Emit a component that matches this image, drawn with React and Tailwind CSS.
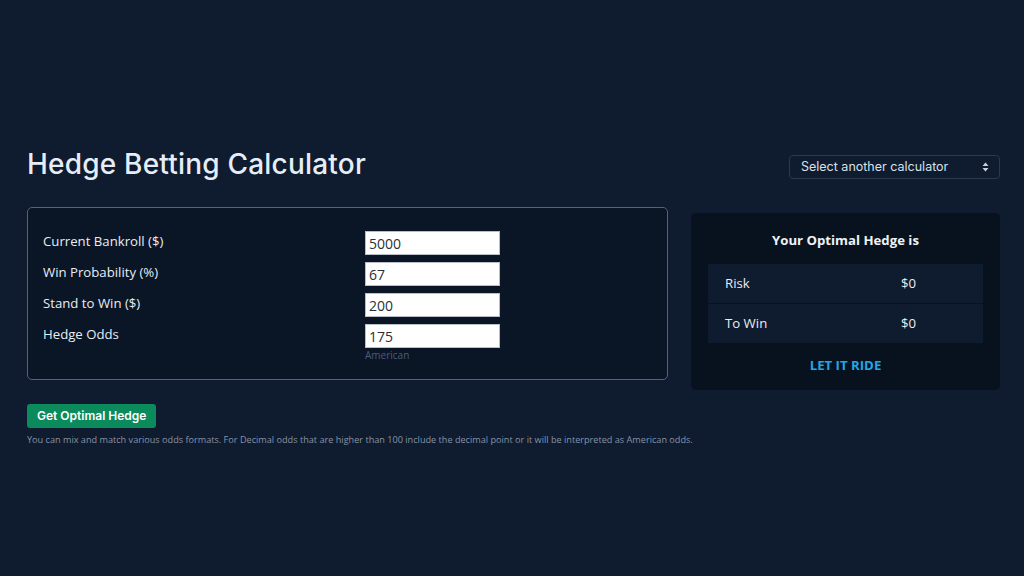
import { useState } from 'react';

const fields = [
    { key: 'bankroll', label: 'Current Bankroll ($)', value: '5000' },
    { key: 'prob', label: 'Win Probability (%)', value: '67' },
    { key: 'stand', label: 'Stand to Win ($)', value: '200' },
    { key: 'odds', label: 'Hedge Odds', value: '175', hint: 'American' },
];

const heading = { fontFamily: 'Inter, "Open Sans", sans-serif' };
const body = { fontFamily: '"Open Sans", "Liberation Sans", sans-serif' };

const App = () => {
    const [values, setValues] = useState(
        Object.fromEntries(fields.map((f) => [f.key, f.value]))
    );

    return (
        <div className="min-h-screen w-full bg-[#0f1b2e] text-white" style={body}>
            <div className="px-[27px] pt-[146px] pr-[24px]">
                <div className="flex items-start justify-between">
                    <h1 className="text-[28px] leading-[36px] font-medium text-[#e6edf6] tracking-[0.2px]" style={heading}>
                        Hedge Betting Calculator
                    </h1>
                    <div className="mt-[9px] flex h-[24px] w-[211px] items-center justify-between rounded-[4px] border border-[#2a3850] bg-[#0f1b2e] pl-[11px] pr-[10px]">
                        <span className="text-[12.5px] text-[#d8e0ea]" style={heading}>Select another calculator</span>
                        <svg width="7" height="10" viewBox="0 0 7 10" fill="#c7d0db">
                            <path d="M3.5 0.5L6.5 4H0.5z" />
                            <path d="M3.5 9.5L6.5 6H0.5z" />
                        </svg>
                    </div>
                </div>

                <div className="mt-[25px] flex items-start gap-[23px]">
                    <div className="w-[641px] shrink-0">
                        <div className="h-[173px] w-[641px] rounded-[5px] border border-[#56627a] bg-[#0a1526] pl-[15px] pt-[23px]">
                            <div className="flex flex-col gap-[7px]">
                                {fields.map((f) => (
                                    <div key={f.key} className="flex items-start">
                                        <label className="w-[322px] text-[13.2px] leading-[20px] text-[#e8edf4]">
                                            {f.label}
                                        </label>
                                        <div className="flex flex-col">
                                            <input
                                                value={values[f.key]}
                                                onChange={(e) => setValues({ ...values, [f.key]: e.target.value })}
                                                className="h-[24px] w-[135px] border border-[#b8bfc8] bg-white px-[3px] text-[14px] text-[#2b2f36] outline-none"
                                            />
                                            {f.hint && (
                                                <span className="mt-[1px] text-[10px] leading-[13px] text-[#4d5d75]">{f.hint}</span>
                                            )}
                                        </div>
                                    </div>
                                ))}
                            </div>
                        </div>

                        <button
                            className="mt-[24px] h-[24px] rounded-[3px] bg-[#0b8a5b] px-[10px] text-[12px] font-semibold text-white"
                            style={heading}
                        >
                            Get Optimal Hedge
                        </button>
                        <p className="mt-[6px] text-[9.15px] leading-[12px] text-[#8793a6] whitespace-nowrap">
                            You can mix and match various odds formats. For Decimal odds that are higher than 100 include the decimal point or it will be interpreted as American odds.
                        </p>
                    </div>

                    <div className="mt-[6px] w-[309px] rounded-[5px] bg-[#08121f] px-[17px] pt-[17px] pb-[15px]">
                        <div className="text-center text-[13.2px] font-bold leading-[20px] text-[#eef2f7]">
                            Your Optimal Hedge is
                        </div>
                        <div className="mt-[14px] flex flex-col gap-[1px]">
                            {[
                                ['Risk', '$0'],
                                ['To Win', '$0'],
                            ].map(([k, v]) => (
                                <div key={k} className="flex h-[39px] items-center bg-[#0f1b2e] pl-[17px] text-[13.2px] text-[#e8edf4]">
                                    <span className="w-[176px]">{k}</span>
                                    <span>{v}</span>
                                </div>
                            ))}
                        </div>
                        <div className="mt-[12px] text-center text-[13.2px] font-bold leading-[20px] text-[#22a7e6]">
                            LET IT RIDE
                        </div>
                    </div>
                </div>
            </div>
        </div>
    );
};

export default App;
